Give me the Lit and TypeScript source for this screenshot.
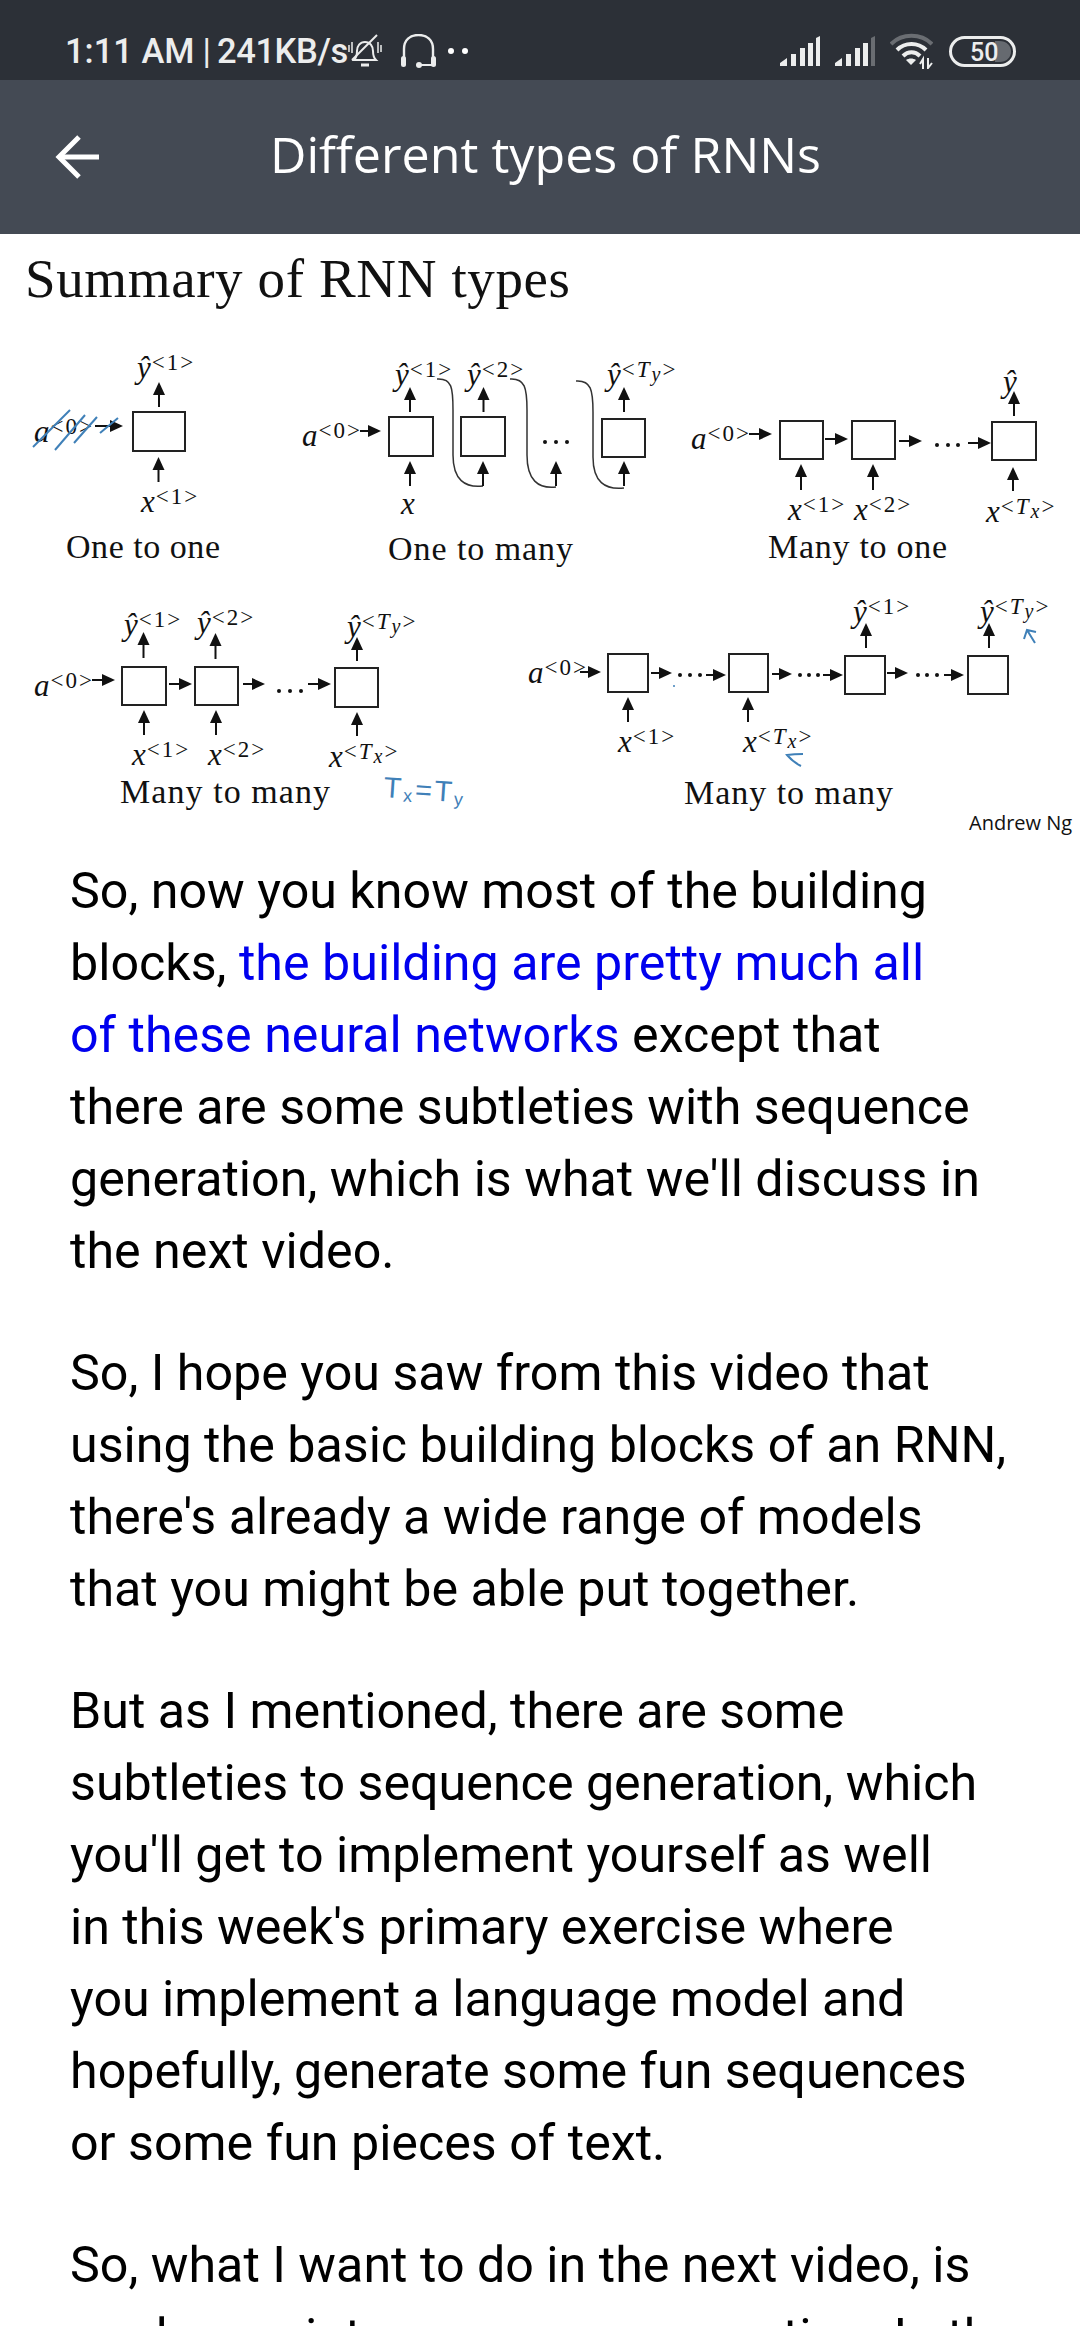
import { LitElement, html, svg, css } from "lit";
import { customElement } from "lit/decorators.js";

type Num = number;

// slide geometry is the content here, so it is kept as data in page pixels (y minus 234)
const boxes: Num[][] = [
  [133, 412, 52, 39],
  [389, 417, 44, 39], [461, 417, 44, 39], [602, 419, 43, 38],
  [780, 421, 43, 38], [852, 421, 43, 38], [992, 422, 44, 38],
  [122, 667, 44, 38], [195, 667, 43, 38], [335, 668, 43, 39],
  [608, 654, 40, 38], [729, 654, 39, 38], [845, 656, 40, 38], [968, 656, 40, 38],
];

// x, y from, y to
const upArrows: Num[][] = [
  [159, 407, 382], [158.5, 482, 457],
  [410, 412, 387], [483.5, 412, 387], [624, 412, 387],
  [410, 486, 461], [483, 486, 461], [556, 486, 461], [624, 486, 461],
  [1014, 416, 391], [801, 490, 464], [873, 490, 464], [1013, 491, 467],
  [143.5, 658, 632], [215.5, 659, 633], [357, 661, 637],
  [144, 735, 710], [216, 735, 710], [357, 736, 712],
  [866, 648, 623], [989, 648, 623], [628, 722, 697], [748, 722, 697],
];

// x from, x to, y
const rightArrows: Num[][] = [
  [95, 123, 426],
  [360, 381, 431],
  [749, 772, 434], [825, 848, 439], [899, 922, 441], [968, 991, 443],
  [92, 115, 680], [169, 192, 684], [243, 265, 684], [308, 331, 684],
  [580, 601, 672], [651, 672, 673], [706, 726, 675], [772, 792, 674],
  [823, 843, 675], [887, 908, 673], [944, 964, 675],
];

const dots: Num[][] = [
  [545, 442], [556, 442], [567, 442],
  [937, 445], [948, 445], [958, 445],
  [279, 691], [290, 691], [301, 691],
  [680, 675], [690, 675], [700, 675],
  [800, 675], [809, 675], [818, 675],
  [918, 675], [927, 675], [937, 675],
];

const hops = [
  "M437 379C452 378 453 388 453 410V455C453 480 465 488 483 486",
  "M510 379C525 378 527 388 527 410V455C527 480 538 489 556 487",
  "M576 381C591 380 593 390 593 412V457C593 482 605 490 624 488",
];

// base letter, sup text, x, y
const labels: [string, string, Num, Num][] = [
  ["ŷ", "1", 137, 378], ["x", "1", 141, 512], ["a", "0", 34, 442],
  ["ŷ", "1", 395, 385], ["ŷ", "2", 467, 385], ["ŷ", "Ty", 607, 385],
  ["a", "0", 302, 446], ["x", "", 401, 514],
  ["a", "0", 691, 449], ["ŷ", "", 1003, 392],
  ["x", "1", 788, 520], ["x", "2", 854, 520], ["x", "Tx", 986, 522],
  ["a", "0", 34, 696], ["ŷ", "1", 124, 635], ["ŷ", "2", 197, 633], ["ŷ", "Ty", 347, 637],
  ["x", "1", 132, 765], ["x", "2", 208, 765], ["x", "Tx", 329, 767],
  ["a", "0", 528, 683], ["ŷ", "1", 853, 622], ["ŷ", "Ty", 980, 622],
  ["x", "1", 618, 752], ["x", "Tx", 743, 752],
];

// text, x, baseline, width
const captions: [string, Num, Num, Num][] = [
  ["One to one", 66, 558, 154],
  ["One to many", 388, 560, 185],
  ["Many to one", 768, 558, 179],
  ["Many to many", 120, 803, 210],
  ["Many to many", 684, 804, 209],
];

const inkStrokes = [
  "M33 447L70 410", "M55 450L85 415", "M74 443L97 417", "M100 433L118 418",
  "M1024 639L1027 630L1036 632M1027 630L1035 643",
  "M803 754Q794 754 787 755Q793 762 801 766",
];

const paragraphs: unknown[][] = [
  [
    "So, now you know most of the building",
    html`blocks, <span class="hl">the building are pretty much all</span>`,
    html`<span class="hl">of these neural networks</span> except that`,
    "there are some subtleties with sequence",
    "generation, which is what we'll discuss in",
    "the next video.",
  ],
  [
    "So, I hope you saw from this video that",
    "using the basic building blocks of an RNN,",
    "there's already a wide range of models",
    "that you might be able put together.",
  ],
  [
    "But as I mentioned, there are some",
    "subtleties to sequence generation, which",
    "you'll get to implement yourself as well",
    "in this week's primary exercise where",
    "you implement a language model and",
    "hopefully, generate some fun sequences",
    "or some fun pieces of text.",
  ],
  [
    "So, what I want to do in the next video, is",
    "go deeper into sequence generation. In the",
  ],
];

function supText(sup: string) {
  if (sup.length === 2) {
    return svg`<tspan class="sup" dx="1" dy="-8">&lt;<tspan class="sup-t">T</tspan><tspan class="sub" dy="4">${sup[1]}</tspan><tspan dy="-4">&gt;</tspan></tspan>`;
  }
  return svg`<tspan class="sup" dx="1" dy="-8">&lt;${sup}&gt;</tspan>`;
}

@customElement("app-root")
export class AppRoot extends LitElement {
  static styles = css`
    :host {
      display: block;
      width: 1080px;
      height: 2340px;
      overflow: hidden;
      background: #fff;
      font-family: Roboto, sans-serif;
    }
    .status {
      height: 80px;
      background: #2c3037;
      color: #eceded;
      display: flex;
      align-items: center;
      padding: 22px 64px 0 65px;
      box-sizing: border-box;
    }
    .clock {
      font-size: 34.5px;
      font-weight: 500;
      white-space: nowrap;
    }
    .clock .sep {
      font-weight: 400;
      margin: 0 6px 0 8px;
    }
    .clock .speed {
      letter-spacing: -0.4px;
    }
    .status svg {
      display: block;
      flex: none;
    }
    .headset {
      margin-left: 19px;
    }
    .more {
      margin-left: 12px;
    }
    .spacer {
      flex: 1;
    }
    .sim + .sim {
      margin-left: 15px;
    }
    .wifi {
      margin-left: 15px;
    }
    .battery {
      margin-left: 16px;
    }
    .battery text {
      font-family: Roboto, sans-serif;
      font-size: 25px;
      font-weight: 500;
      fill: #eceded;
    }
    .bar {
      height: 154px;
      background: #444a54;
      display: flex;
      align-items: center;
      padding-left: 55px;
      box-sizing: border-box;
      color: #fff;
    }
    .bar svg {
      display: block;
      flex: none;
      margin-right: 171px;
    }
    .bar h1 {
      margin: 0 0 8px;
      font-family: "Open Sans", sans-serif;
      font-size: 50.2px;
      font-weight: 400;
      white-space: nowrap;
    }
    .slide {
      display: block;
      width: 1080px;
      height: 612px;
    }
    .slide text {
      font-family: "Liberation Serif", serif;
      fill: #111;
    }
    .slide .title {
      font-size: 55px;
    }
    .slide .caption {
      font-size: 34px;
    }
    .slide .math {
      font-size: 31px;
      font-style: italic;
    }
    .slide .sup {
      font-size: 23px;
      font-style: normal;
      letter-spacing: 2px;
    }
    .slide .sup-t,
    .slide .sub {
      font-style: italic;
    }
    .slide .sub {
      font-size: 20px;
    }
    .slide .credit {
      font-family: "Open Sans", sans-serif;
      font-size: 20px;
    }
    .slide .ink-text {
      font-family: "Liberation Sans", sans-serif;
      font-size: 29px;
      fill: #3f80b8;
    }
    .slide .ink-sub {
      font-size: 18px;
    }
    .box {
      fill: #fff;
      stroke: #222;
      stroke-width: 2;
    }
    .shaft {
      stroke: #111;
      stroke-width: 2;
    }
    .hop {
      fill: none;
      stroke: #333;
      stroke-width: 1.5;
    }
    .ink {
      fill: none;
      stroke: #3f80b8;
      stroke-width: 2;
    }
    main {
      height: 1480px;
      box-sizing: border-box;
      overflow: hidden;
      padding: 9px 0 0 70px;
      font-size: 50.2px;
      line-height: 72px;
      color: #000;
      white-space: nowrap;
    }
    main p {
      margin: 0 0 50px;
    }
    main p span.line {
      display: block;
    }
    .hl {
      color: #0000ee;
    }
  `;

  renderSlide() {
    return html`<svg class="slide" viewBox="0 234 1080 612">
      <text class="title" x="25" y="297" textLength="545">Summary of RNN types</text>
      ${hops.map((d) => svg`<path class="hop" d=${d}></path>`)}
      ${boxes.map(([x, y, w, h]) => svg`<rect class="box" x=${x} y=${y} width=${w} height=${h}></rect>`)}
      ${upArrows.map(
        ([x, from, to]) => svg`<line class="shaft" x1=${x} y1=${from} x2=${x} y2=${to + 8}></line>
          <polygon fill="#111" points="${x},${to} ${x - 6},${to + 13} ${x + 6},${to + 13}"></polygon>`
      )}
      ${rightArrows.map(
        ([from, to, y]) => svg`<line class="shaft" x1=${from} y1=${y} x2=${to - 8} y2=${y}></line>
          <polygon fill="#111" points="${to},${y} ${to - 13},${y - 6} ${to - 13},${y + 6}"></polygon>`
      )}
      ${dots.map(([x, y]) => svg`<circle cx=${x} cy=${y} r="2" fill="#111"></circle>`)}
      ${labels.map(
        ([base, sup, x, y]) => svg`<text class="math" x=${x} y=${y}>${base}${sup ? supText(sup) : ""}</text>`
      )}
      ${captions.map(
        ([t, x, y, w]) => svg`<text class="caption" x=${x} y=${y} textLength=${w}>${t}</text>`
      )}
      <text class="credit" x="969" y="830">Andrew Ng</text>
      ${inkStrokes.map((d) => svg`<path class="ink" d=${d}></path>`)}
      <circle cx="674" cy="686" r="1" fill="#3f80b8"></circle>
      <text class="ink-text" x="383" y="797" textLength="80" transform="rotate(4 383 797)">T<tspan class="ink-sub" dy="3">x</tspan><tspan dy="-3">=T</tspan><tspan class="ink-sub" dy="3">y</tspan></text>
    </svg>`;
  }

  render() {
    return html`
      <div class="status">
        <span class="clock">1:11 AM<span class="sep">|</span><span class="speed">241KB/s</span></span>
        <svg class="bell" width="34" height="34" viewBox="0 0 34 34" fill="none" stroke="#eceded" stroke-width="2">
          <path d="M6 26c2-2 3-4 3-9 0-5 3-9 8-9s8 4 8 9c0 5 1 7 3 9z"></path>
          <path d="M13 31h8" stroke-width="3"></path>
          <path d="M4 26L29 1"></path>
          <path d="M1 11v7M4 8v11M30 8v11M33 11v7" stroke-width="1.5"></path>
        </svg>
        <svg class="headset" width="35" height="34" viewBox="0 0 35 34" fill="none" stroke="#eceded">
          <path d="M3 25V15C3 6 9 1 17.5 1S32 6 32 15V25" stroke-width="2.4"></path>
          <rect x="0" y="22" width="5" height="11" rx="2.5" fill="#eceded" stroke="none"></rect>
          <rect x="30" y="22" width="5" height="11" rx="2.5" fill="#eceded" stroke="none"></rect>
          <path d="M18 31H31" stroke-width="2"></path>
          <circle cx="18" cy="31" r="3" fill="#eceded" stroke="none"></circle>
        </svg>
        <svg class="more" width="21" height="8" viewBox="0 0 21 8" fill="#fff">
          <circle cx="3" cy="4" r="3"></circle>
          <circle cx="17" cy="4" r="3"></circle>
        </svg>
        <span class="spacer"></span>
        <svg class="sim" width="40" height="30" viewBox="0 0 40 30" fill="#eceded">
          <path d="M0 30V27L7 22V30zM11 30V18H16V30zM20 30V12H25V30zM28 30V7H33V30zM36 30V2L40 0V30z"></path>
        </svg>
        <svg class="sim" width="40" height="30" viewBox="0 0 40 30" fill="#eceded">
          <path d="M0 30V27L7 22V30zM11 30V18H16V30zM20 30V12H25V30zM28 30V7H33V30z"></path>
          <path d="M36 30V2L40 0V30z" fill="#6a6d72"></path>
        </svg>
        <svg class="wifi" width="43" height="36" viewBox="0 0 43 36" fill="none" stroke="#eceded" stroke-width="4">
          <path d="M1 11C12 0 31 0 42 11" stroke="#6a6d72"></path>
          <path d="M7 17C15 9 28 9 36 17"></path>
          <path d="M13 23C18 18 25 18 30 23"></path>
          <path d="M21 32L16 27C19 25 23 25 26 27z" fill="#eceded" stroke="none"></path>
          <path d="M33 36V26L30 31M38 25V35L42 30" stroke-width="2"></path>
        </svg>
        <svg class="battery" width="67" height="31" viewBox="0 0 67 31" fill="none">
          <rect x="1.5" y="1.5" width="64" height="28" rx="14" stroke="#eceded" stroke-width="3"></rect>
          <path d="M46 5H50C58 5 62 10 62 15.500S58 26 50 26H46z" fill="#666a70"></path>
          <text x="21" y="25">50</text>
        </svg>
      </div>
      <div class="bar">
        <svg width="44" height="44" viewBox="0 0 44 44" fill="none" stroke="#fff" stroke-width="5">
          <path d="M44 22H4"></path>
          <path d="M24 2L4 22L24 42"></path>
        </svg>
        <h1>Different types of RNNs</h1>
      </div>
      ${this.renderSlide()}
      <main>
        ${paragraphs.map(
          (lines) => html`<p>${lines.map((l) => html`<span class="line">${l}</span>`)}</p>`
        )}
      </main>
    `;
  }
}
